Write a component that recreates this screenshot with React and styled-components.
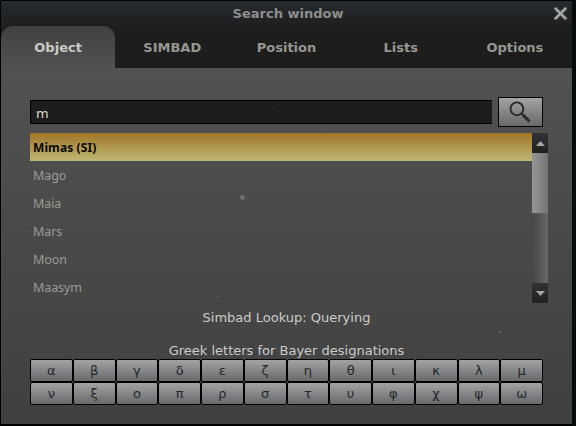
import React from "react";
import styled, { createGlobalStyle, css } from "styled-components";

const GlobalStyle = createGlobalStyle`
  * { box-sizing: border-box; }
  body {
    margin: 0;
    background: #080a0a;
    font-family: "DejaVu Sans", sans-serif;
    font-size: 13px;
    overflow: hidden;
  }
`;

const Window = styled.main`
  position: relative;
  display: flex;
  flex-direction: column;
  width: 576px;
  height: 426px;
  padding: 1px 4px 2px 1px;
  background: linear-gradient(90deg, #000 0 572px, #080b0b 572px);
`;

const TitleBar = styled.header`
  display: grid;
  grid-template-columns: 28px 1fr 28px;
  align-items: center;
  height: 25px;
  flex: none;
  background: linear-gradient(#252b2e, #1e1f20);
`;

const Title = styled.h1`
  grid-column: 2;
  margin: 0;
  padding-left: 3px;
  font-size: 13px;
  line-height: 25px;
  font-weight: bold;
  text-align: center;
  color: #8d8e8e;
`;

const CloseButton = styled.button`
  display: flex;
  padding: 0 0 0 8px;
  border: 0;
  background: none;
`;

const Tabs = styled.nav`
  display: grid;
  grid-template-columns: repeat(5, 1fr);
  height: 42px;
  flex: none;
  background: #1d1d1d;
`;

const Tab = styled.button`
  padding: 1px 0 0;
  border: 0;
  border-radius: 12px 12px 0 0;
  background: ${(p) => (p.$active ? "linear-gradient(#414141, #515151)" : "none")};
  color: ${(p) => (p.$active ? "#c9cac4" : "#96978f")};
  font: bold 13px/41px "DejaVu Sans", sans-serif;
  text-align: center;
`;

const Panel = styled.section`
  display: flex;
  flex-direction: column;
  flex: 1;
  padding: 29px 24px 0 29px;
  background: linear-gradient(#525252, #404040);
`;

const SearchRow = styled.div`
  display: flex;
  align-items: center;
  gap: 6px;
  height: 30px;
`;

const SearchInput = styled.input`
  width: 462px;
  height: 24px;
  padding: 3px 5px 0;
  border: solid #000;
  border-width: 1px 0 1px 1px;
  border-radius: 0;
  outline: 0;
  background: #1d1d1d;
  color: #dcdcd4;
  font: 13px "DejaVu Sans", sans-serif;
`;

const raised = css`
  border: 1px solid #000;
  background: linear-gradient(#a1a3a5, #68696a);
`;

const SearchButton = styled.button`
  ${raised}
  width: 45px;
  height: 30px;
  padding: 0;
  display: flex;
`;

const Results = styled.div`
  display: flex;
  width: 518px;
  height: 170px;
  margin-top: 6px;
`;

const ResultList = styled.ul`
  flex: 1;
  margin: 0;
  padding: 0;
  list-style: none;
`;

const Result = styled.li`
  height: 28px;
  padding: 1px 3px 0;
  color: ${(p) => (p.$selected ? "#090700" : "#9b9b94")};
  background: ${(p) => (p.$selected ? "linear-gradient(#a17427, #beb975)" : "none")};
  font: ${(p) => (p.$selected ? "bold 12px" : "12.5px")} / 28px "Noto Sans", sans-serif;
  letter-spacing: ${(p) => (p.$selected ? "0.1px" : "-0.1px")};
`;

const ScrollBar = styled.div`
  display: grid;
  grid-template-rows: 20px 1fr 20px;
  width: 16px;
  background: linear-gradient(90deg, #474747, #686868);
`;

const ScrollButton = styled.button`
  display: flex;
  padding: 0;
  border: 0;
  background: linear-gradient(#323335, #202020);
`;

const Thumb = styled.div`
  height: 60px;
  background: linear-gradient(90deg, #969696, #747474);
`;

const Captions = styled.div`
  width: 513px;
  padding-top: 5px;
  color: #ccccc9;
  text-align: center;
`;

const Status = styled.p`
  margin: 0;
  line-height: 20px;
`;

const Caption = styled.p`
  margin: 13px 0 0;
  height: 18px;
  line-height: 20px;
`;

const GreekGrid = styled.div`
  display: grid;
  grid-template-columns: repeat(12, 1fr);
  width: 513px;
`;

const GreekKey = styled.button`
  ${raised}
  height: 23px;
  padding: 0;
  border-radius: 2px;
  color: #252729;
  font: 13px/21px "DejaVu Sans", sans-serif;
`;

const Star = styled.i`
  position: absolute;
  left: ${(p) => p.$x}px;
  top: ${(p) => p.$y}px;
  width: ${(p) => p.$size}px;
  height: ${(p) => p.$size}px;
  border-radius: 50%;
  background: radial-gradient(#8a8a8a, #6a6a6a);
  opacity: ${(p) => p.$glow};
`;

const tabs = ["Object", "SIMBAD", "Position", "Lists", "Options"];
const results = ["Mimas (SI)", "Mago", "Maia", "Mars", "Moon", "Maasym"];
const greek = [..."αβγδεζηθικλμνξοπρστυφχψω"];
const stars = [
  [240, 195, 5, 0.7],
  [217, 296, 2, 0.5],
  [499, 331, 2, 0.7],
  [272, 108, 1, 0.5],
  [321, 130, 1, 0.6],
  [482, 125, 1, 0.6],
  [28, 224, 1, 0.6],
  [500, 78, 1, 0.5],
];

function Arrow({ down }) {
  return (
    <svg width="16" height="20" viewBox="0 0 16 20">
      <path d={down ? "M4 8h9L8.5 13z" : "M4 13h9L8.5 8z"} fill="#a5a5a5" />
    </svg>
  );
}

export default function App() {
  return (
    <>
      <GlobalStyle />
      <Window>
        <TitleBar>
          <Title>Search window</Title>
          <CloseButton aria-label="Close">
            <svg width="17" height="17" viewBox="0 0 17 17" fill="none">
              <path d="M3.5 3.5l10 10M13.5 3.5l-10 10" stroke="#62686a" strokeWidth="4" strokeLinecap="round" opacity=".5" />
              <path d="M3 3l11 11M14 3L3 14" stroke="#aaa" strokeWidth="2.4" />
            </svg>
          </CloseButton>
        </TitleBar>
        <Tabs>
          {tabs.map((t, i) => (
            <Tab key={t} $active={i === 0}>{t}</Tab>
          ))}
        </Tabs>
        <Panel>
          <SearchRow>
            <SearchInput defaultValue="m" aria-label="Object name" />
            <SearchButton aria-label="Search">
              <svg width="43" height="28" viewBox="0 0 43 28" fill="none" stroke="#292b2b">
                <circle cx="17.9" cy="10.8" r="6.4" strokeWidth="1.9" />
                <path d="M22.3 15.3l2 2" strokeWidth="2" />
                <path d="M23.8 16.9l6.8 6.6" strokeWidth="3" />
              </svg>
            </SearchButton>
          </SearchRow>
          <Results>
            <ResultList>
              {results.map((r, i) => (
                <Result key={r} $selected={i === 0}>{r}</Result>
              ))}
            </ResultList>
            <ScrollBar>
              <ScrollButton aria-label="Scroll up"><Arrow /></ScrollButton>
              <Thumb />
              <ScrollButton aria-label="Scroll down"><Arrow down /></ScrollButton>
            </ScrollBar>
          </Results>
          <Captions>
            <Status>Simbad Lookup: Querying</Status>
            <Caption>Greek letters for Bayer designations</Caption>
          </Captions>
          <GreekGrid>
            {greek.map((g) => (
              <GreekKey key={g}>{g}</GreekKey>
            ))}
          </GreekGrid>
        </Panel>
        {stars.map(([x, y, size, glow]) => (
          <Star key={`${x}-${y}`} $x={x} $y={y} $size={size} $glow={glow} />
        ))}
      </Window>
    </>
  );
}
